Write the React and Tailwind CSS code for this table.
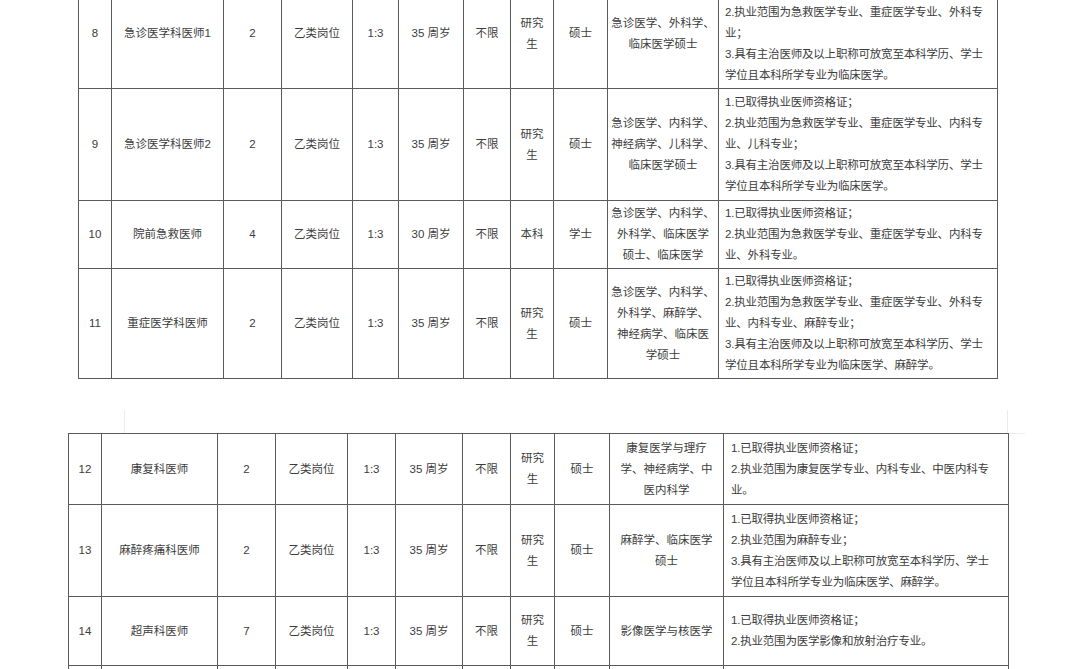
import React from 'react';

const req1 = "1.已取得执业医师资格证；";
const req3a = "3.具有主治医师及以上职称可放宽至本科学历、学士";

const topRows = [
  {
    h: "h-[110px]",
    no: "8", name: "急诊医学科医师1", num: "2", age: "35 周岁", edu: ["研究", "生"], deg: "硕士",
    major: ["急诊医学、外科学、", "临床医学硕士"],
    req: [req1, "2.执业范围为急救医学专业、重症医学专业、外科专", "业；", req3a, "学位且本科所学专业为临床医学。"],
  },
  {
    h: "h-[112px]",
    no: "9", name: "急诊医学科医师2", num: "2", age: "35 周岁", edu: ["研究", "生"], deg: "硕士",
    major: ["急诊医学、内科学、", "神经病学、儿科学、", "临床医学硕士"],
    req: [req1, "2.执业范围为急救医学专业、重症医学专业、内科专", "业、儿科专业；", req3a, "学位且本科所学专业为临床医学。"],
  },
  {
    h: "h-[68px]",
    no: "10", name: "院前急救医师", num: "4", age: "30 周岁", edu: ["本科"], deg: "学士",
    major: ["急诊医学、内科学、", "外科学、临床医学", "硕士、临床医学"],
    req: [req1, "2.执业范围为急救医学专业、重症医学专业、内科专", "业、外科专业。"],
  },
  {
    h: "h-[110px]",
    no: "11", name: "重症医学科医师", num: "2", age: "35 周岁", edu: ["研究", "生"], deg: "硕士",
    major: ["急诊医学、内科学、", "外科学、麻醉学、", "神经病学、临床医", "学硕士"],
    req: [req1, "2.执业范围为急救医学专业、重症医学专业、外科专", "业、内科专业、麻醉专业；", req3a, "学位且本科所学专业为临床医学、麻醉学。"],
  },
];

const bottomRows = [
  {
    h: "h-[71px]",
    no: "12", name: "康复科医师", num: "2", age: "35 周岁", edu: ["研究", "生"], deg: "硕士",
    major: ["康复医学与理疗", "学、神经病学、中", "医内科学"],
    req: [req1, "2.执业范围为康复医学专业、内科专业、中医内科专", "业。"],
  },
  {
    h: "h-[92px]",
    no: "13", name: "麻醉疼痛科医师", num: "2", age: "35 周岁", edu: ["研究", "生"], deg: "硕士",
    major: ["麻醉学、临床医学", "硕士"],
    req: [req1, "2.执业范围为麻醉专业；", req3a, "学位且本科所学专业为临床医学、麻醉学。"],
  },
  {
    h: "h-[69px]",
    no: "14", name: "超声科医师", num: "7", age: "35 周岁", edu: ["研究", "生"], deg: "硕士",
    major: ["影像医学与核医学"],
    req: [req1, "2.执业范围为医学影像和放射治疗专业。"],
  },
  {
    h: "h-[60px]",
    no: "", name: "", num: "", age: "", edu: [], deg: "", major: [], req: [], blank: true,
  },
];

function Cell({ lines, left, pad }) {
  return (
    <div
      className={
        "flex flex-col justify-center border-r border-b border-[#5a5a5a] " +
        (left ? "items-start tracking-[-0.2px] " + pad : "items-center text-center")
      }
    >
      {lines.map((l, i) => (
        <div key={i} className="whitespace-nowrap leading-[21px]">{l}</div>
      ))}
    </div>
  );
}

function Row({ row, cols, pad }) {
  return (
    <div className={"grid " + cols + " " + row.h}>
      <Cell lines={[row.no]} />
      <Cell lines={[row.name]} />
      <Cell lines={[row.num]} />
      <Cell lines={row.blank ? [] : ["乙类岗位"]} />
      <Cell lines={row.blank ? [] : ["1:3"]} />
      <Cell lines={[row.age]} />
      <Cell lines={row.blank ? [] : ["不限"]} />
      <Cell lines={row.edu} />
      <Cell lines={[row.deg]} />
      <Cell lines={row.major} />
      <Cell lines={row.req} left pad={pad} />
    </div>
  );
}

export default function App() {
  return (
    <div
      className="h-[669px] w-[1080px] overflow-hidden bg-white text-[11.5px] text-[#3c3c3c]"
      style={{ fontFamily: '"Liberation Sans", "Noto Sans CJK SC", sans-serif' }}
    >
      <div className="mt-[-22px] ml-[78px] w-[920px] border-l border-t border-[#5a5a5a]">
        {topRows.map((r) => (
          <Row key={r.no} row={r} pad="pl-[6px]" cols="grid-cols-[33px_112px_58px_71px_46px_65px_47px_43px_54px_111px_279px]" />
        ))}
      </div>

      <div className="h-[54px] pt-[31px]">
        <div className="ml-[124px] h-[23px] w-[884px] border-x border-[#ececec]" />
      </div>

      <div className="flex">
        <div className="ml-[68px] w-[941px] border-l border-t border-[#5a5a5a]">
          {bottomRows.map((r, i) => (
            <Row key={i} row={r} pad="pl-[7px]" cols="grid-cols-[33px_116px_58px_72px_48px_67px_48px_44px_55px_114px_285px]" />
          ))}
        </div>
        <div className="h-px w-[16px] bg-[#eeeeee]" />
      </div>
    </div>
  );
}
